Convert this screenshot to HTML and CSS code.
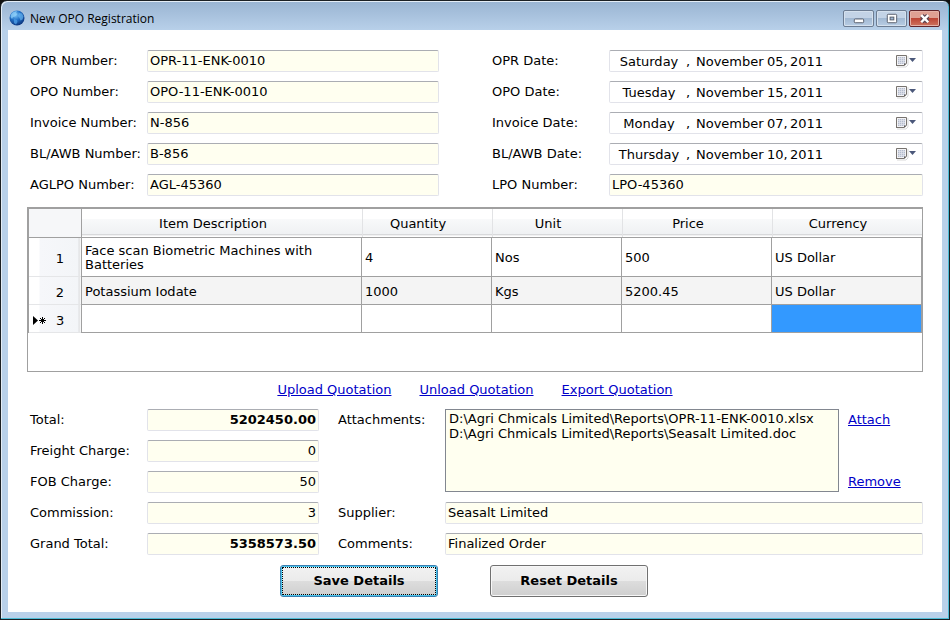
FILE: index.html
```html
<!DOCTYPE html>
<html lang="en">
<head>
<meta charset="utf-8">
<title>New OPO Registration</title>
<link rel="stylesheet" href="styles.css">
</head>
<body>
<svg width="0" height="0" class="sprite" aria-hidden="true">
  <symbol id="calendar" viewBox="0 0 22 14">
    <path d="M2 13h9l2-2V2" fill="none" stroke="#d9d9d9"/>
    <path d="M1 1h10v10l-1 1H1z" fill="#f4f4f6"/>
    <path d="M1.500 12V1.500H11.500V9.500" fill="none" stroke="#77736f"/>
    <path d="M1 11.500h8" stroke="#77736f"/>
    <path d="M3 3h7v7H3z" fill="#b4bccd"/>
    <path d="M3 4.500h7M3 6.500h7M3 8.500h7M4.500 3v7M6.500 3v7M8.500 3v7" stroke="#e3e6ee" stroke-opacity=".7"/>
    <path d="M9 12V9.500h3z" fill="#5f5c5a"/>
    <path d="M14 4h7l-3.500 4z" fill="#4b587a"/>
  </symbol>
</svg>
<div class="window">
  <header class="titlebar">
    <svg class="globe" viewBox="0 0 16 16" aria-hidden="true">
      <defs><radialGradient id="sea" cx=".4" cy=".3" r=".7"><stop offset="0" stop-color="#7cc4f5"/><stop offset=".5" stop-color="#2272c8"/><stop offset="1" stop-color="#0b357f"/></radialGradient></defs>
      <circle cx="8" cy="8" r="7.500" fill="url(#sea)"/>
      <path d="M2 4.500C4 1.500 6 1 8 1.200L7 3l1.500 1L6 6.500 4 7 3 9 1.500 7z" fill="#8fd0fa" opacity=".75"/>
      <path d="M10 3l3 .5 1.500 3-1 3-2 1-1-2.500L9 6z" fill="#66b4ef" opacity=".7"/>
      <path d="M5 9l3 1 .5 2L7 14.500 5 13z" fill="#4b9be3" opacity=".8"/>
    </svg>
    <h1>New OPO Registration</h1>
    <div class="controls">
      <button type="button" aria-label="Minimize"><svg viewBox="0 0 30 16"><rect x="10.500" y="8.500" width="10" height="4" rx="1" fill="#fff" stroke="#535a68"/></svg></button>
      <button type="button" aria-label="Maximize"><svg viewBox="0 0 30 16"><rect x="10.500" y="3.500" width="10" height="9" rx="1" fill="#fff" stroke="#535a68"/><rect x="13.500" y="6.500" width="4" height="3" fill="#9eb6d2" stroke="#535a68"/></svg></button>
      <button type="button" class="close" aria-label="Close"><svg viewBox="0 0 30 16"><path d="M12 5l6.500 6.500M18.500 5L12 11.500" stroke="#5a4350" stroke-width="5"/><path d="M11.500 4.500l7.500 7.500M19 4.500L11.500 12" stroke="#fff" stroke-width="2.600"/></svg></button>
    </div>
  </header>
  <main>
    <form>
      <div class="details">
        <div class="stack left">
          <div class="field"><label for="opr">OPR Number:</label><input id="opr" value="OPR-11-ENK-0010"></div>
          <div class="field"><label for="opo">OPO Number:</label><input id="opo" value="OPO-11-ENK-0010"></div>
          <div class="field"><label for="inv">Invoice Number:</label><input id="inv" value="N-856"></div>
          <div class="field"><label for="bl">BL/AWB Number:</label><input id="bl" value="B-856"></div>
          <div class="field"><label for="agl">AGLPO Number:</label><input id="agl" value="AGL-45360"></div>
        </div>
        <div class="stack dates">
          <div class="field"><label for="opr-date">OPR Date:</label>
            <div class="date"><input id="opr-date" class="weekday" value="Saturday"><span>,</span><input class="month" aria-label="Month" value="November"><input class="day" aria-label="Day" value="05,"><input class="year" aria-label="Year" value="2011"><button type="button" aria-label="Open calendar"><svg><use href="#calendar"/></svg></button></div></div>
          <div class="field"><label for="opo-date">OPO Date:</label>
            <div class="date"><input id="opo-date" class="weekday" value="Tuesday"><span>,</span><input class="month" aria-label="Month" value="November"><input class="day" aria-label="Day" value="15,"><input class="year" aria-label="Year" value="2011"><button type="button" aria-label="Open calendar"><svg><use href="#calendar"/></svg></button></div></div>
          <div class="field"><label for="inv-date">Invoice Date:</label>
            <div class="date"><input id="inv-date" class="weekday" value="Monday"><span>,</span><input class="month" aria-label="Month" value="November"><input class="day" aria-label="Day" value="07,"><input class="year" aria-label="Year" value="2011"><button type="button" aria-label="Open calendar"><svg><use href="#calendar"/></svg></button></div></div>
          <div class="field"><label for="bl-date">BL/AWB Date:</label>
            <div class="date"><input id="bl-date" class="weekday" value="Thursday"><span>,</span><input class="month" aria-label="Month" value="November"><input class="day" aria-label="Day" value="10,"><input class="year" aria-label="Year" value="2011"><button type="button" aria-label="Open calendar"><svg><use href="#calendar"/></svg></button></div></div>
          <div class="field"><label for="lpo">LPO Number:</label><input id="lpo" value="LPO-45360"></div>
        </div>
      </div>

      <div class="items">
        <table>
          <colgroup><col class="c-head"><col><col class="c-small"><col class="c-small"><col class="c-wide"><col class="c-wide"></colgroup>
          <thead><tr><td></td><th scope="col">Item Description</th><th scope="col">Quantity</th><th scope="col">Unit</th><th scope="col">Price</th><th scope="col">Currency</th></tr></thead>
          <tbody>
            <tr class="tall"><th scope="row">1</th><td>Face scan Biometric Machines with Batteries</td><td>4</td><td>Nos</td><td>500</td><td>US Dollar</td></tr>
            <tr class="alt"><th scope="row">2</th><td>Potassium Iodate</td><td>1000</td><td>Kgs</td><td>5200.45</td><td>US Dollar</td></tr>
            <tr><th scope="row"><div class="new-row"><svg viewBox="0 0 14 9" aria-hidden="true"><path d="M0 0v9l5-4.500z"/><path d="M9.500 1v7M6 4.500h7M7 2l5 5M12 2l-5 5" stroke="#000" fill="none"/></svg>3</div></th><td></td><td></td><td></td><td></td><td class="selected"></td></tr>
          </tbody>
        </table>
      </div>

      <nav class="links"><a href="#upload">Upload Quotation</a><a href="#unload">Unload Quotation</a><a href="#export">Export Quotation</a></nav>

      <div class="summary">
        <div class="stack left amounts">
          <div class="field"><label for="total">Total:</label><input id="total" class="strong" value="5202450.00"></div>
          <div class="field"><label for="freight">Freight Charge:</label><input id="freight" value="0"></div>
          <div class="field"><label for="fob">FOB Charge:</label><input id="fob" value="50"></div>
          <div class="field"><label for="commission">Commission:</label><input id="commission" value="3"></div>
          <div class="field"><label for="grand">Grand Total:</label><input id="grand" class="strong" value="5358573.50"></div>
        </div>
        <div class="stack notes">
          <div class="field attachments"><label for="files">Attachments:</label>
            <div class="files">
              <select id="files" multiple size="5"><option>D:\Agri Chmicals Limited\Reports\OPR-11-ENK-0010.xlsx</option><option>D:\Agri Chmicals Limited\Reports\Seasalt Limited.doc</option></select>
              <div class="file-links"><a href="#attach">Attach</a><a href="#remove">Remove</a></div>
            </div></div>
          <div class="field"><label for="supplier">Supplier:</label><input id="supplier" value="Seasalt Limited"></div>
          <div class="field"><label for="comments">Comments:</label><input id="comments" value="Finalized Order"></div>
        </div>
      </div>

      <div class="actions"><button type="submit" class="default">Save Details</button><button type="reset">Reset Details</button></div>
    </form>
  </main>
</div>
</body>
</html>
```

FILE: styles.css
```css
* { box-sizing: border-box; }

body {
  margin: 0;
  background: #111;
  color: #000;
  font: 13px/16px "DejaVu Sans", Verdana, sans-serif;
}

input, select, button {
  font: inherit;
  color: inherit;
  margin: 0;
}

a { color: #0000c8; }
.sprite { position: absolute; }

.window {
  display: flex;
  flex-direction: column;
  min-height: 100vh;
  padding: 0 6px 6px;
  border: 1px solid #1b2024;
  border-radius: 7px 7px 0 0;
  background: linear-gradient(#99b4d2, #b9d1ea 30px);
  box-shadow: inset -1px -1px #4dbcd6, inset 1px 1px #e4edf6;
}

.titlebar {
  display: flex;
  align-items: center;
  height: 29px;
  padding: 6px 3px 0 2px;
}

.globe { width: 16px; height: 16px; margin-bottom: 2px; }

.titlebar h1 {
  flex: 1;
  margin: 0 0 0 5px;
  font: 12px/18px "Open Sans", "Noto Sans", sans-serif;
}

.controls { display: flex; gap: 2px; }

.controls button {
  width: 31px;
  height: 17px;
  padding: 0;
  border: 1px solid #6c7c92;
  border-radius: 2px;
  background: linear-gradient(#c3d3e6 45%, #a2b9d3 50%, #b8cde4);
  box-shadow: inset 0 0 0 1px #d5e1ee;
}

.controls svg { display: block; width: 29px; height: 15px; }

.controls .close {
  border-color: #61242a;
  background: linear-gradient(#dfa093 45%, #bd4636 50%, #ce7460);
  box-shadow: inset 0 0 0 1px #e5b2a8;
}

main {
  flex: 1;
  margin: 0 1px 1px;
  padding: 20px 19px 15px;
  background: #fff;
}

.details {
  display: grid;
  grid-template-columns: 412fr 431fr;
  gap: 53px;
}

.stack {
  display: flex;
  flex-direction: column;
  gap: 9px;
}

.field {
  display: grid;
  grid-template-columns: 120px minmax(0, 1fr);
}

.left label { padding-left: 3px; }
.dates .field { grid-template-columns: 117px minmax(0, 1fr); }
.notes .field { grid-template-columns: 107px minmax(0, 1fr); }
label { line-height: 22px; white-space: nowrap; }

.field > input, .date {
  width: 100%;
  height: 22px;
  border: 1px solid #e2e3ea;
  border-top-color: #abadb3;
  border-radius: 2px;
}

.field > input {
  padding: 0 2px 1px;
  background: #fffff0;
}

.amounts .field > input { text-align: right; }
.amounts .strong { font-weight: bold; }

.date {
  display: flex;
  align-items: center;
  padding: 1px 3px 0 4px;
  background: #fff;
}

.date input {
  height: 18px;
  padding: 0;
  border: 0;
  background: none;
}

.date .weekday { width: 70px; text-align: center; }
.date span { width: 12px; padding-left: 2px; }
.date .month { width: 71px; }
.date .day { width: 23px; }
.date .year { width: 40px; }

.date button {
  margin-left: auto;
  padding: 0 0 2px;
  border: 0;
  background: none;
}

.date svg { display: block; width: 22px; height: 14px; margin-right: 2px; }

.items {
  min-height: 165px;
  margin-top: 11px;
  border: 1px solid #a0a0a0;
}

table {
  width: 100%;
  table-layout: fixed;
  border-spacing: 0;
  line-height: 14px;
}

.c-head { width: 54px; }
.c-small { width: 130px; }
.c-wide { width: 150px; }
th { font-weight: normal; }

thead th, thead td {
  height: 30px;
  padding: 2px 18px 0 0;
  border: 1px solid #a0a0a0;
  border-width: 1px 0;
  background: linear-gradient(#fff 35%, #f8f9fa 36%, #eff1f3 90%, #d8d9db 91%, #d8d9db 94%, #fff 95%);
}

thead th + th { box-shadow: inset 1px 0 #e2e3e5; }

thead td {
  border-right-width: 1px;
  border-left-width: 1px;
  background: #f6f7f9;
}

tbody tr { height: 28px; }
tbody .tall { height: 39px; }

tbody td {
  padding: 2px 3px 0;
  border: 1px solid #a0a0a0;
  border-width: 0 1px 1px 0;
}

tbody th {
  padding: 3px 0 0 10px;
  border: 1px solid #a0a0a0;
  border-width: 0 1px;
  background: linear-gradient(90deg, #fff 10px, #f6f7fa 11px, #f3f5f8 49px, #dedfe1 50px, #fff 52px);
  box-shadow: inset 0 -1px #e5e6e8;
}

.alt td { background: #f4f4f4; }
tbody .selected { background: #3399ff; }

.new-row {
  display: flex;
  align-items: center;
  gap: 9px;
  margin-left: -6px;
}

.new-row svg { width: 14px; height: 9px; }

.links {
  display: flex;
  justify-content: center;
  gap: 28px;
  padding: 10px 0 11px;
}

.summary {
  display: grid;
  grid-template-columns: 292fr 585fr;
  gap: 19px;
}

.files { display: flex; min-height: 84px; gap: 9px; }

.files select {
  flex: 1;
  min-width: 0;
  height: 83px;
  padding: 1px;
  border: 1px solid #828790;
  border-radius: 0;
  background: #fffff0;
  overflow: auto;
}

.files option {
  min-height: 15px;
  padding: 0 2px;
  line-height: 15px;
}

.file-links {
  display: flex;
  flex-direction: column;
  justify-content: space-between;
  width: 75px;
  padding: 3px 0;
}

.actions {
  display: flex;
  justify-content: center;
  gap: 52px;
  padding: 10px 22px 0 0;
}

.actions button {
  width: 158px;
  height: 32px;
  border: 1px solid #707070;
  border-radius: 3px;
  background: linear-gradient(#f2f2f2, #ebebeb 49%, #dddddd 50%, #cfcfcf);
  box-shadow: inset 0 0 0 1px #f7f7f7;
  font-weight: bold;
}

.actions .default {
  border-color: #3c7fb1;
  box-shadow: inset 0 0 0 1px #48c5ec;
  outline: 1px dotted #000;
  outline-offset: -3px;
}
```
